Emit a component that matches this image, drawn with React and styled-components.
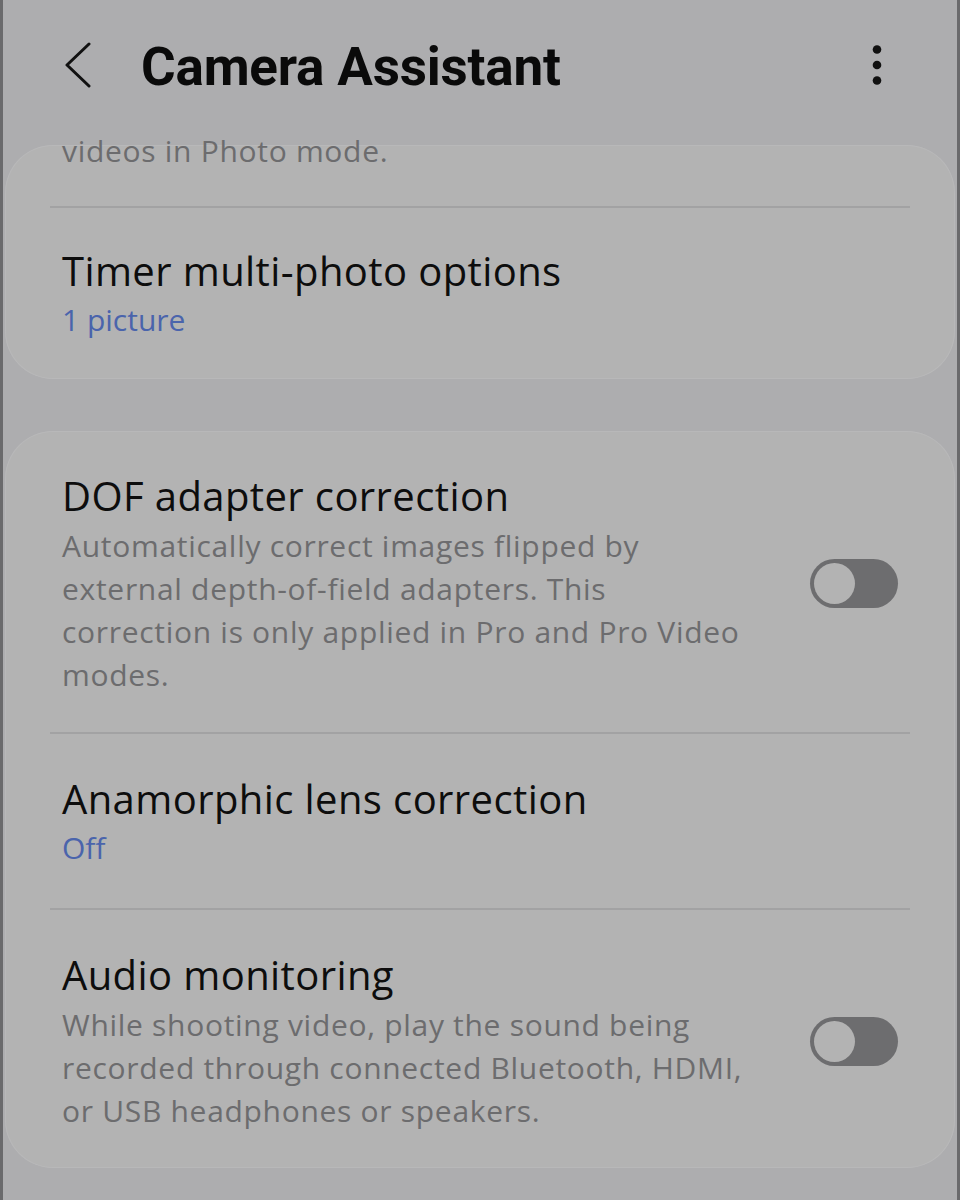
import React from 'react';
import styled, { createGlobalStyle } from 'styled-components';

const GlobalStyle = createGlobalStyle`
    html, body {
        margin: 0;
        padding: 0;
        background: #adadaf;
    }
    * {
        box-sizing: border-box;
    }
`;

const Screen = styled.div`
    width: 960px;
    height: 1200px;
    background: #adadaf;
    border-left: 3px solid #6a6a6c;
    border-right: 3px solid #6a6a6c;
    display: flex;
    flex-direction: column;
    overflow: hidden;
    font-family: "Open Sans", "Noto Sans", sans-serif;
`;

const Header = styled.header`
    height: 139px;
    flex-shrink: 0;
    display: flex;
    align-items: flex-start;
    padding: 39px 70px 0 60px;
`;

const BackButton = styled.div`
    width: 78px;
    height: 52px;
    display: flex;
    align-items: center;
`;

const Title = styled.h1`
    margin: 0;
    padding-top: 2px;
    flex: 1;
    font-family: Roboto, "Liberation Sans", sans-serif;
    font-weight: 700;
    font-size: 53px;
    line-height: 52px;
    letter-spacing: -0.2px;
    color: #0a0a0a;
`;

const MoreButton = styled.div`
    width: 20px;
    height: 52px;
    display: flex;
    justify-content: center;
    align-items: center;
`;

const Scroll = styled.div`
    flex: 1;
    overflow: hidden;
    padding: 6px 2px 0 2px;
    display: flex;
    flex-direction: column;
    gap: 52px;
`;

const Card = styled.section`
    background: #b3b3b3;
    border-radius: 48px;
    box-shadow: inset 0 0 0 1px #b8b8b9;
    padding: 0 45px;
`;

const Row = styled.div`
    display: flex;
    align-items: center;
    gap: 40px;
    padding: ${p => p.$pad || '40px 12px 36px'};
    border-top: ${p => (p.$divider ? '2px solid #a2a2a3' : 'none')};
`;

const RowText = styled.div`
    flex: 1;
    display: flex;
    flex-direction: column;
`;

const ItemTitle = styled.div`
    font-size: 40px;
    line-height: 50px;
    color: #0d0d0d;
    letter-spacing: 0.4px;
`;

const ItemValue = styled.div`
    font-size: 30px;
    line-height: 48px;
    color: #4a64ac;
`;

const ItemDesc = styled.div`
    font-size: 30px;
    line-height: 43px;
    color: #6c6c6e;
    letter-spacing: 0.7px;
    margin-top: ${p => p.$top || '3px'};
`;

const DescLine = styled.span`
    display: block;
    white-space: nowrap;
`;

const Toggle = styled.div`
    width: 88px;
    height: 49px;
    border-radius: 25px;
    background: #6d6d6f;
    flex-shrink: 0;
    padding: 4px;
    display: flex;
    align-items: center;
`;

const Knob = styled.div`
    width: 41px;
    height: 41px;
    border-radius: 50%;
    background: #b3b3b3;
`;

const settings = [
    {
        title: 'DOF adapter correction',
        desc: [
            'Automatically correct images flipped by',
            'external depth-of-field adapters. This',
            'correction is only applied in Pro and Pro Video',
            'modes.',
        ],
        toggle: true,
    },
    {
        title: 'Anamorphic lens correction',
        value: 'Off',
    },
    {
        title: 'Audio monitoring',
        desc: [
            'While shooting video, play the sound being',
            'recorded through connected Bluetooth, HDMI,',
            'or USB headphones or speakers.',
        ],
        toggle: true,
    },
];

const App = () => {
    return (
        <>
            <GlobalStyle />
            <Screen>
                <Header>
                    <BackButton>
                        <svg width="30" height="46" viewBox="0 0 30 46">
                            <path d="M26 2 L4 23 L26 44" fill="none" stroke="#111" strokeWidth="3" strokeLinecap="round" strokeLinejoin="round" />
                        </svg>
                    </BackButton>
                    <Title>Camera Assistant</Title>
                    <MoreButton>
                        <svg width="12" height="44" viewBox="0 0 12 44">
                            <circle cx="6" cy="6.5" r="4.3" fill="#111" />
                            <circle cx="6" cy="22" r="4.3" fill="#111" />
                            <circle cx="6" cy="37.5" r="4.3" fill="#111" />
                        </svg>
                    </MoreButton>
                </Header>
                <Scroll>
                    <Card>
                        <Row $pad="0 12px 34px">
                            <RowText>
                                <ItemDesc $top="-16px">videos in Photo mode.</ItemDesc>
                            </RowText>
                        </Row>
                        <Row $divider $pad="38px 12px 35px">
                            <RowText>
                                <ItemTitle>Timer multi-photo options</ItemTitle>
                                <ItemValue>1 picture</ItemValue>
                            </RowText>
                        </Row>
                    </Card>
                    <Card>
                        {settings.map((s, i) => (
                            <Row key={s.title} $divider={i > 0}>
                                <RowText>
                                    <ItemTitle>{s.title}</ItemTitle>
                                    {s.value && <ItemValue>{s.value}</ItemValue>}
                                    {s.desc && (
                                        <ItemDesc>
                                            {s.desc.map(line => (
                                                <DescLine key={line}>{line}</DescLine>
                                            ))}
                                        </ItemDesc>
                                    )}
                                </RowText>
                                {s.toggle && (
                                    <Toggle>
                                        <Knob />
                                    </Toggle>
                                )}
                            </Row>
                        ))}
                    </Card>
                </Scroll>
            </Screen>
        </>
    );
};

export default App;
